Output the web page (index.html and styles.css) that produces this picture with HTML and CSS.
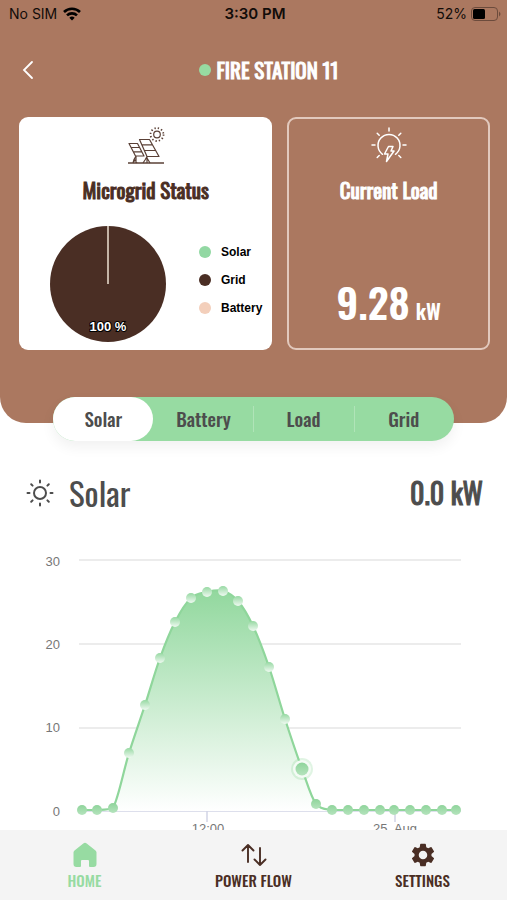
FILE: index.html
```html
<!DOCTYPE html>
<html lang="en">
<head>
<meta charset="utf-8">
<meta name="viewport" content="width=device-width, initial-scale=1">
<title>Fire Station 11</title>
<link rel="stylesheet" href="styles.css">
</head>
<body>
<div class="app">
  <header class="hero">
    <div class="status">
      <div class="status-left"><span>No SIM</span>
        <svg width="18" height="14" viewBox="0 0 18 14" fill="none" stroke="#000" stroke-width="2.6" aria-hidden="true"><path d="M1 5a11.4 11.4 0 0 1 16 0"/><path d="M4 8.400a7.200 7.200 0 0 1 10 0"/><path d="M9 13.500 6.300 10.700a3.900 3.900 0 0 1 5.400 0z" fill="#000" stroke="none"/></svg>
      </div>
      <div class="status-time">3:30 PM</div>
      <div class="status-right"><span>52%</span>
        <svg width="30" height="14" viewBox="0 0 30 14" aria-hidden="true"><rect x="0.500" y="0.500" width="26" height="13" rx="3.500" fill="none" stroke="#6c4b3c"/><rect x="2" y="2" width="12" height="10" rx="1.500"/><path d="M28 4.500q3 2.500 0 5z" fill="#6c4b3c"/></svg>
      </div>
    </div>
    <div class="title-row">
      <button class="back" type="button" aria-label="Back"><svg width="12" height="20" viewBox="0 0 12 20" fill="none" stroke="#fff" stroke-width="1.800" stroke-linecap="round"><path d="M10 2 2 10l8 8"/></svg></button>
      <h1 class="title"><span class="online"></span>FIRE STATION 11</h1>
    </div>
    <div class="cards">
      <section class="card card-light">
        <svg class="card-icon" width="38" height="38" viewBox="0 0 38 38" fill="none" stroke="#5a4036" stroke-width="1.200" stroke-linejoin="round" aria-hidden="true">
          <path d="M1 36h36" stroke-width="1.600"/>
          <path d="M2 16.500h8.500L17 29H8.500zM4 20.500h8.600M6.300 24.800h8.500"/>
          <path d="M12.500 12.500h10L32 29.500H20zM15 17.800h10.400M17.500 23.500h11"/>
          <path d="m9 29-2 3.500-1 3.500M9 29v7M6 36l2-3 2 3M20 29.500 18 33l-2 3M20 29.500v6.500M20 31l3 5"/>
          <circle cx="30" cy="7.500" r="3.300"/><circle cx="30" cy="7.500" r="6.500" stroke-width="1.800" stroke-dasharray="1.300 2.104"/>
        </svg>
        <h2>Microgrid Status</h2>
        <div class="mix">
          <svg class="pie" width="118" height="118" viewBox="0 0 118 118" role="img" aria-label="Grid 100 %"><circle cx="59" cy="59" r="58" fill="#4a2e24"/><path d="M59 1v58" stroke="#eee2d2" stroke-width="1.500"/><text x="59" y="106" text-anchor="middle">100 %</text></svg>
          <ul class="legend">
            <li><i class="dot solar"></i>Solar</li>
            <li><i class="dot grid"></i>Grid</li>
            <li><i class="dot battery"></i>Battery</li>
          </ul>
        </div>
      </section>
      <section class="card card-outline">
        <svg class="card-icon" width="38" height="38" viewBox="0 0 38 38" fill="none" stroke="#fff" stroke-width="1.500" stroke-linecap="round" stroke-linejoin="round" aria-hidden="true">
          <path d="M12.500 27.300a11 11 0 1 1 13 0"/>
          <path d="M19 1v3M7.200 6.200l2 2M30.800 6.200l-2 2M2 18h3M36 18h-3M7.200 30.500l2-2M30.800 30.500l-2-2"/>
          <path d="M18.500 19.500h4.500l-2 4.500h3l-7.500 10.500 1.500-7.500h-3.500z"/>
        </svg>
        <h2>Current Load</h2>
        <p class="load"><span>9.28</span><small>kW</small></p>
      </section>
    </div>
  </header>
  <nav class="tabs" aria-label="Source">
    <button type="button" class="tab active">Solar</button>
    <button type="button" class="tab">Battery</button>
    <button type="button" class="tab">Load</button>
    <button type="button" class="tab">Grid</button>
  </nav>
  <main class="content">
    <div class="reading">
      <svg width="28" height="28" viewBox="0 0 28 28" fill="none" stroke="#4d4d4d" stroke-width="2" stroke-linecap="round" aria-hidden="true"><circle cx="14" cy="14" r="6"/><path d="M14 1.500v2M14 24.500v2M1.500 14h2M24.500 14h2M5.200 5.200l1.400 1.400M21.400 21.400l1.400 1.400M5.200 22.800l1.400-1.400M21.400 6.600l1.400-1.400"/></svg>
      <h2>Solar</h2>
      <strong>0.0 kW</strong>
    </div>
    <svg class="chart" viewBox="0 0 507 300" role="img" aria-label="Solar output in kW">
      <defs>
        <linearGradient id="area" x1="0" y1="0" x2="0" y2="1"><stop offset="0" stop-color="#92d89e"/><stop offset="1" stop-color="#fff"/></linearGradient>
        <linearGradient id="marker" x1="0" y1="0" x2="0" y2="1"><stop offset="0" stop-color="#97d9a3"/><stop offset="1" stop-color="#eff9f1"/></linearGradient>
        <linearGradient id="flat" x1="0" y1="0" x2="0" y2="1"><stop offset="0" stop-color="#8fd49b"/><stop offset="1" stop-color="#b5e3bd"/></linearGradient>
      </defs>
      <path class="rule" d="M79 20h382M79 104h382M79 188h382"/>
      <path class="axis" d="M79 271h382M207 271v11M395 271v11"/>
      <g class="y-labels"><text x="60" y="26">30</text><text x="60" y="109">20</text><text x="60" y="192">10</text><text x="60" y="276">0</text></g>
      <g class="x-labels"><text x="208" y="293">12:00</text><text x="395" y="293">25. Aug</text></g>
      <g id="series"></g>
    </svg>
  </main>
  <nav class="bottom" aria-label="Main">
    <a href="#home" class="active"><svg width="26" height="26" viewBox="0 0 26 26" aria-hidden="true"><path fill="currentColor" d="M11.300 1.600a2.600 2.600 0 0 1 3.400 0l8.800 7a2.600 2.600 0 0 1 1 2V22a3 3 0 0 1-3 3H18a1 1 0 0 1-1-1v-5a1 1 0 0 0-1-1h-6a1 1 0 0 0-1 1v5a1 1 0 0 1-1 1H4.500a3 3 0 0 1-3-3V10.600a2.600 2.600 0 0 1 1-2z"/></svg>HOME</a>
    <a href="#flow"><svg width="26" height="26" viewBox="0 0 26 26" fill="none" stroke="currentColor" stroke-width="1.900" stroke-linecap="round" stroke-linejoin="round" aria-hidden="true"><path d="M7 20V3M1.500 8.500 7 3l5.500 5.500M19 6v17M13.500 17.500 19 23l5.500-5.500"/></svg>POWER FLOW</a>
    <a href="#settings"><svg width="26" height="26" viewBox="1 1 22 22" aria-hidden="true"><path fill="currentColor" fill-rule="evenodd" d="M19.140 12.940c.04-.3.06-.61.06-.94s-.02-.64-.07-.94l2.030-1.580a.49.49 0 0 0 .12-.61l-1.920-3.320a.49.49 0 0 0-.59-.22l-2.390.96a7 7 0 0 0-1.620-.94l-.36-2.540A.48.48 0 0 0 13.920 2.400h-3.840a.48.48 0 0 0-.47.41l-.36 2.540c-.59.240-1.130.57-1.620.94l-2.390-.96a.48.48 0 0 0-.59.220L2.740 8.870a.47.47 0 0 0 .12.610l2.030 1.580c-.05.3-.09.630-.09.940s.02.640.07.940l-2.030 1.580a.49.49 0 0 0-.12.610l1.920 3.320c.12.220.37.290.59.220l2.390-.96c.5.380 1.030.7 1.620.94l.36 2.540c.05.240.24.410.48.410h3.840c.24 0 .44-.17.47-.41l.36-2.540c.59-.24 1.130-.56 1.620-.94l2.390.96c.22.080.47 0 .59-.22l1.920-3.320a.47.47 0 0 0-.12-.61zM12 15.600a3.600 3.600 0 1 1 0-7.200 3.600 3.600 0 0 1 0 7.200z"/></svg>SETTINGS</a>
  </nav>
</div>
<script src="chart.js"></script>
</body>
</html>
```
FILE: styles.css
```css
* { box-sizing: border-box; }
body { margin: 0; background: #fff; font-family: "Oswald", "Liberation Sans Narrow", "Roboto Condensed", "Liberation Sans", sans-serif; }
h1, h2, p, ul { margin: 0; padding: 0; }
button { font: inherit; border: 0; background: none; padding: 0; color: inherit; }
svg { display: block; flex: none; }
.app { height: 100vh; display: flex; flex-direction: column; overflow: hidden; }
.hero { flex: none; background: #ab7860; border-radius: 0 0 26px 26px; padding-bottom: 73px; }
.status { display: grid; grid-template-columns: 1fr auto 1fr; align-items: center; height: 28px; padding: 0 6px 0 9px; font: 14px/28px Inter, sans-serif; color: #120c09; }
.status-left, .status-right { display: flex; align-items: center; gap: 6px; }
.status-right { justify-content: flex-end; gap: 4px; }
.status-time { font-size: 15px; font-weight: 600; }
.title-row { display: grid; grid-template-columns: 20px 1fr; column-gap: 10px; align-items: center; padding: 0 18px; height: 84px; }
.back { display: flex; justify-content: center; }
.title, .card h2, .reading strong { font-weight: 400; -webkit-text-stroke: 1px currentColor; }
.title { display: flex; align-items: center; justify-content: center; gap: 6px; color: #fff; font-size: 21px; line-height: 24px; }
.online { width: 12px; height: 12px; border-radius: 50%; background: #97dba2; }
.cards { display: grid; grid-template-columns: 5fr 4fr; gap: 15px; padding: 5px 17px 0 19px; }
.card { height: 233px; border-radius: 9px; display: flex; flex-direction: column; align-items: center; padding-top: 10px; }
.card-light { background: #fff; color: #4a2e24; }
.card-outline { border: 2px solid #e2c9bd; padding-top: 8px; color: #fff; }
.card h2 { margin-top: 11px; font-size: 21px; line-height: 28px; }
.mix { width: 100%; display: flex; align-items: center; justify-content: space-between; padding: 21px 10px 0 30px; }
.pie text { font: bold 13px "Liberation Sans", sans-serif; fill: #fff; stroke: #000; stroke-width: 2px; paint-order: stroke; }
.legend { list-style: none; font: bold 12px/28px "Liberation Sans", sans-serif; color: #000; margin-top: -8px; }
.legend li { display: flex; align-items: center; gap: 10px; }
.dot { width: 12px; height: 12px; border-radius: 50%; }
.solar { background: #92d8a3; }
.grid { background: #4a2e24; }
.battery { background: #f3cfbb; }
.load { display: flex; align-items: baseline; gap: 6px; margin-top: auto; margin-bottom: 10px; font-size: 41px; line-height: 54px; font-weight: 600; }
.load small { font-size: 21px; }
.tabs { flex: none; display: grid; grid-template-columns: repeat(4, 1fr); width: 79%; height: 44px; margin: -26px auto 0; border-radius: 22px; background: #97dba2; box-shadow: 0 6px 14px rgba(0, 0, 0, 0.06); color: #4d4d4d; position: relative; }
.tab { padding-bottom: 2px; font-size: 19px; font-weight: 500; line-height: 24px; background: linear-gradient(#b0e4b8, #b0e4b8) left center / 1px 26px no-repeat; }
.tab.active { background: #fff; border-radius: 22px; }
.tab.active + .tab { background: none; }
.content { flex: 1; min-height: 0; overflow: hidden; color: #4d4d4d; }
.reading { display: flex; align-items: center; padding: 28px 24px 0 26px; height: 76px; }
.reading h2 { flex: 1; margin-left: 15px; font-size: 33px; font-weight: normal; line-height: 44px; }
.reading strong { font-size: 28px; line-height: 40px; }
.chart { width: 100%; height: auto; margin-top: 23px; }
.chart text { font: 13px "Liberation Sans", sans-serif; fill: #777; }
.y-labels { text-anchor: end; }
.x-labels { text-anchor: middle; }
.rule { stroke: #e6e6e6; stroke-width: 1.5; }
.axis { stroke: #d2d5e6; stroke-width: 1.5; fill: none; }
.line { stroke: #8fd69b; stroke-width: 2.2; fill: none; }
.bottom { flex: none; height: 70px; background: #f4f4f4; display: grid; grid-template-columns: repeat(3, 1fr); }
.bottom a { display: flex; flex-direction: column; align-items: center; padding-top: 12px; gap: 2px; color: #4a2e24; text-decoration: none; font-size: 15px; line-height: 20px; font-weight: 500; }
.bottom a.active { color: #97dba2; }
```
FILE: chart.js
```js
// Hourly readings as [x, y] in chart units.
const points = [[82,270],[97,270],[113,268],[129,213],[145,165],[160,118],[175,82],[191,58],[207,52],[223,51],[238,61],[253,86],[269,127],[285,179],[302,229],[316,264],[332,270],[348,270],[364,270],[380,270],[394,270],[410,270],[426,270],[442,270],[456,270]];
const CURRENT = 14;
const BASE = 271;

let line = `M${points[0]}`;
for (let i = 0; i < points.length - 1; i++) {
  const before = points[Math.max(i - 1, 0)];
  const a = points[i];
  const b = points[i + 1];
  const after = points[Math.min(i + 2, points.length - 1)];
  const c1 = [a[0] + (b[0] - before[0]) / 6, Math.min(270, a[1] + (b[1] - before[1]) / 6)];
  const c2 = [b[0] - (after[0] - a[0]) / 6, Math.min(270, b[1] - (after[1] - a[1]) / 6)];
  line += `C${c1} ${c2} ${b}`;
}
const last = points[points.length - 1];
let marks = `<path d="${line}L${last[0]} ${BASE}L${points[0][0]} ${BASE}Z" fill="url(#area)"/><path class="line" d="${line}"/>`;
points.forEach(([x, y], i) => {
  if (i === CURRENT) {
    marks += `<circle cx="${x}" cy="${y}" r="11" fill="#97dba2" opacity="0.3"/><circle cx="${x}" cy="${y}" r="9" fill="#f4fbf5"/><circle cx="${x}" cy="${y}" r="6.5" fill="url(#flat)"/>`;
  } else {
    marks += `<circle cx="${x}" cy="${y}" r="5" fill="url(#${y > 260 ? 'flat' : 'marker'})"/>`;
  }
});
document.getElementById('series').innerHTML = marks;
```
